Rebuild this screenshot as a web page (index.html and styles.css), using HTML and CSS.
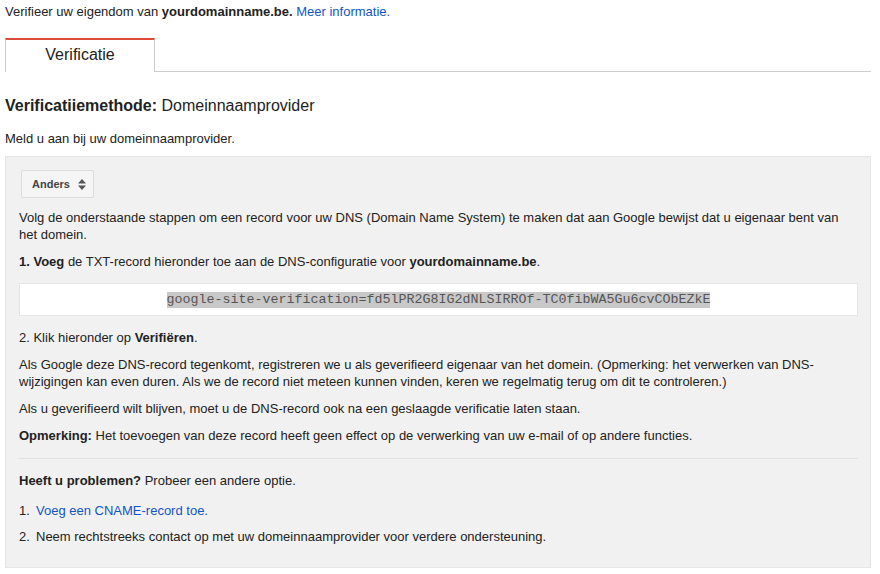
FILE: index.html
```html
<!DOCTYPE html>
<html lang="nl">
<head>
<meta charset="utf-8">
<title>Verificatie</title>
<link rel="stylesheet" href="styles.css">
</head>
<body>
<div class="page">
  <p class="intro">Verifieer uw eigendom van <b>yourdomainname.be.</b> <a href="#" class="link">Meer informatie.</a></p>

  <div class="tabs">
    <div class="tab active">Verificatie</div>
    <div class="tab-rest"></div>
  </div>

  <h2 class="method"><b>Verificatiiemethode:</b> Domeinnaamprovider</h2>
  <p class="lead">Meld u aan bij uw domeinnaamprovider.</p>

  <div class="panel">
    <div class="select">
      <span class="select-label">Anders</span>
      <svg class="select-arrows" width="8" height="11" viewBox="0 0 8 11"><path d="M4 0 L8 4.5 L0 4.5 Z M0 6.5 L8 6.5 L4 11 Z" fill="#555"/></svg>
    </div>

    <p class="para first">Volg de onderstaande stappen om een record voor uw DNS (Domain Name System) te maken dat aan Google bewijst dat u eigenaar bent van het domein.</p>
    <p class="para"><b>1. Voeg</b> de TXT-record hieronder toe aan de DNS-configuratie voor <b>yourdomainname.be</b>.</p>

    <div class="code-box"><span class="code">google-site-verification=fd5lPR2G8IG2dNLSIRROf-TC0fibWA5Gu6cvCObEZkE</span></div>

    <p class="para after-code">2. Klik hieronder op <b>Verifiëren</b>.</p>
    <p class="para">Als Google deze DNS-record tegenkomt, registreren we u als geverifieerd eigenaar van het domein. (Opmerking: het verwerken van DNS-wijzigingen kan even duren. Als we de record niet meteen kunnen vinden, keren we regelmatig terug om dit te controleren.)</p>
    <p class="para">Als u geverifieerd wilt blijven, moet u de DNS-record ook na een geslaagde verificatie laten staan.</p>
    <p class="para"><b>Opmerking:</b> Het toevoegen van deze record heeft geen effect op de verwerking van uw e-mail of op andere functies.</p>

    <hr class="sep">

    <p class="para trouble"><b>Heeft u problemen?</b> Probeer een andere optie.</p>
    <ol class="options">
      <li class="option"><span class="num">1.</span><a href="#" class="link">Voeg een CNAME-record toe.</a></li>
      <li class="option"><span class="num">2.</span><span>Neem rechtstreeks contact op met uw domeinnaamprovider voor verdere ondersteuning.</span></li>
    </ol>
  </div>
</div>
</body>
</html>
```

FILE: styles.css
```css
html, body {
  margin: 0;
  padding: 0;
  background: #fff;
}

body {
  font-family: Arial, "Liberation Sans", sans-serif;
  font-size: 13px;
  color: #222;
}

.page {
  padding: 4px 9px 0 5px;
}

.intro {
  margin: 0;
  line-height: 16px;
}

.link {
  color: #15c;
  text-decoration: none;
}

.tabs {
  display: flex;
  margin-top: 18px;
  height: 34px;
}

.tab {
  box-sizing: border-box;
  width: 150px;
  height: 34px;
  border-top: 2px solid #dd4b39;
  border-left: 1px solid #ccc;
  border-right: 1px solid #ccc;
  background: #fff;
  font-size: 16px;
  text-align: center;
  line-height: 29px;
  color: #222;
}

.tab-rest {
  flex: 1;
  border-bottom: 1px solid #ccc;
}

.method {
  margin: 24px 0 0;
  font-size: 16px;
  font-weight: normal;
  line-height: 20px;
}

.lead {
  margin: 15px 0 0;
  line-height: 16px;
}

.panel {
  margin-top: 9px;
  background: #f1f1f1;
  border: 1px solid #e5e5e5;
  padding: 13px 12px 22px 13px;
}

.select {
  display: inline-flex;
  align-items: center;
  gap: 8px;
  box-sizing: border-box;
  height: 28px;
  margin-left: 2px;
  padding: 0 7px 0 10px;
  background: #f5f5f5;
  border: 1px solid #dcdcdc;
  border-radius: 2px;
  font-size: 11px;
  font-weight: bold;
  color: #444;
}

.select-arrows {
  display: block;
}

.para {
  margin: 10px 0 0;
  line-height: 17px;
}

.para.first {
  margin-top: 11px;
}

.code-box {
  margin-top: 13px;
  height: 33px;
  box-sizing: border-box;
  background: #fff;
  border: 1px solid #e5e5e5;
  display: flex;
  align-items: center;
  justify-content: center;
}

.code {
  font-family: "Courier New", "Liberation Mono", monospace;
  font-size: 13.33px;
  line-height: 16px;
  color: #555;
  background: #c8c8c8;
}

.para.after-code {
  margin-top: 13px;
}

.sep {
  margin: 14px 0 0;
  border: 0;
  border-top: 1px solid #e2e2e2;
  height: 0;
}

.para.trouble {
  margin-top: 13px;
}

.options {
  list-style: none;
  margin: 0;
  padding: 0;
}

.option {
  display: flex;
  margin-top: 9px;
  line-height: 17px;
}

.option:first-child {
  margin-top: 13px;
}

.num {
  width: 17px;
  flex: none;
}
```
